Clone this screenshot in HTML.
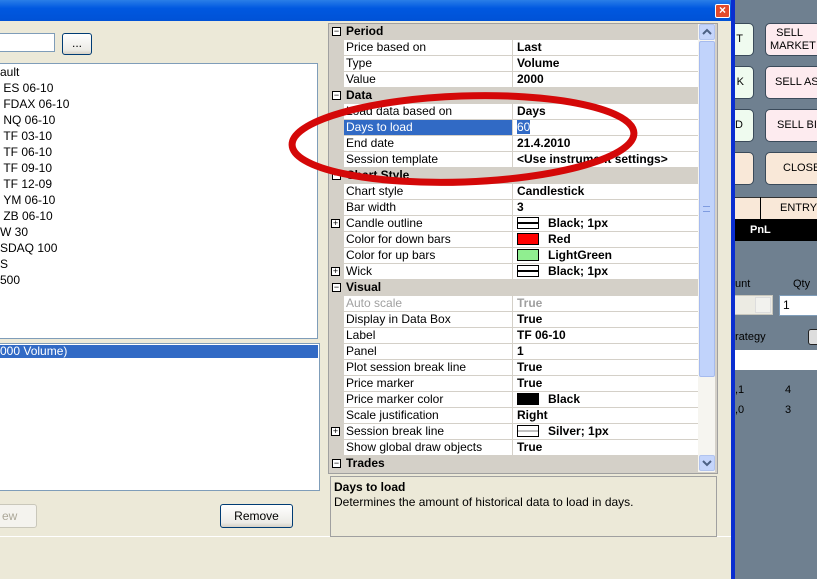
<!DOCTYPE html>
<html><head><meta charset="utf-8"><style>
*{margin:0;padding:0;box-sizing:border-box}
body{width:817px;height:579px;overflow:hidden;background:#ece9d8;font-family:"Liberation Sans",sans-serif;font-size:12px;position:relative;color:#000}
.a{position:absolute}
.row{position:absolute;left:344px;width:354px;height:16px;border-bottom:1px solid #d4d0c8;background:#fff}
.row .k{position:absolute;left:2px;top:0;white-space:nowrap;line-height:15px}
.row .v{position:absolute;left:168px;font-weight:bold;white-space:nowrap;border-left:1px solid #d4d0c8;padding-left:4px;height:16px;top:0;line-height:15px;width:186px}
.hd{position:absolute;left:329px;width:369px;height:16px;background:#d4d0c8;font-weight:bold;font-size:12px;line-height:15px;padding-left:17px}
.pm{position:absolute;left:3px;top:3px;width:9px;height:9px;border:1px solid #000;background:#fff;font-size:9px;line-height:7px;text-align:center;font-weight:normal}
.sw{display:inline-block;width:22px;height:12px;border:1px solid #000;vertical-align:-2px;margin-right:9px}
.li{position:absolute;left:0;height:16px;line-height:16px;font-size:12px;white-space:nowrap}
.rp{position:absolute;left:735px;top:0;width:82px;height:579px;background:#6f8090;overflow:hidden}
.rb{position:absolute;border:1px solid #3a4a5a;border-radius:5px;font-size:11px;text-align:center;white-space:nowrap;overflow:hidden}
</style></head><body>
<div class="a" style="left:0;top:0;width:733px;height:21px;background:linear-gradient(#2a7ee8,#0058e0 40%,#0052d6)"></div>
<div class="a" style="left:715px;top:4px;width:15px;height:14px;background:#e34a2a;border:1px solid #fff;border-radius:2px;color:#fff;font-weight:bold;font-size:12px;line-height:11px;text-align:center">×</div>
<div class="a" style="left:731px;top:0;width:4px;height:579px;background:#0a2ed0"></div>
<div class="rp">
<div class="rb" style="left:-20px;top:23px;width:39px;height:33px;background:#effbef;line-height:31px;text-align:right;padding-right:10px">T</div>
<div class="rb" style="left:30px;top:23px;width:60px;height:33px;background:#fdebef;line-height:13px;padding-top:3px;text-align:left;padding-left:4px">&nbsp;&nbsp;SELL<br>MARKET</div>
<div class="rb" style="left:-20px;top:66px;width:39px;height:33px;background:#effbef;line-height:31px;text-align:right;padding-right:9px">K</div>
<div class="rb" style="left:30px;top:66px;width:60px;height:33px;background:#fdebef;line-height:31px;text-align:left;padding-left:9px">SELL ASK</div>
<div class="rb" style="left:-20px;top:109px;width:39px;height:33px;background:#effbef;line-height:31px;text-align:right;padding-right:10px">D</div>
<div class="rb" style="left:30px;top:109px;width:60px;height:33px;background:#fdebef;line-height:31px;text-align:left;padding-left:11px">SELL BID</div>
<div class="rb" style="left:-20px;top:152px;width:39px;height:33px;background:#f9e8d8"></div>
<div class="rb" style="left:30px;top:152px;width:60px;height:33px;background:#f9e8d8;line-height:31px;text-align:left;padding-left:17px">CLOSE</div>
<div class="a" style="left:0;top:197px;width:82px;height:22px;background:#f9e8d8;border-top:1px solid #333"></div>
<div class="a" style="left:25px;top:197px;width:1px;height:22px;background:#000"></div>
<div class="a" style="left:45px;top:202px;font-size:11px">ENTRY</div>
<div class="a" style="left:0;top:219px;width:82px;height:22px;background:#000;color:#fff;font-weight:bold;font-size:11px;line-height:22px;padding-left:15px">PnL</div>
<div class="a" style="left:0;top:278px;font-size:11px">unt</div>
<div class="a" style="left:58px;top:278px;font-size:11px">Qty</div>
<div class="a" style="left:0;top:295px;width:38px;height:20px;background:#ecebe3;border:1px solid #c8c6bc;border-left:0"></div>
<div class="a" style="left:20px;top:297px;width:16px;height:16px;border:1px solid #ddd;background:#f2f2ee"></div>
<div class="a" style="left:44px;top:295px;width:40px;height:21px;background:#fff;border:1px solid #7f9db9;padding-left:3px;font-size:12px;line-height:18px">1</div>
<div class="a" style="left:0;top:331px;font-size:11px">rategy</div>
<div class="a" style="left:73px;top:329px;width:14px;height:16px;border:1px solid #222;border-radius:3px;background:#ddd"></div>
<div class="a" style="left:0;top:350px;width:82px;height:20px;background:#fff"></div>
<div class="a" style="left:0;top:384px;font-size:11px">,1</div>
<div class="a" style="left:50px;top:384px;font-size:11px">4</div>
<div class="a" style="left:0;top:404px;font-size:11px">,0</div>
<div class="a" style="left:50px;top:404px;font-size:11px">3</div>
</div>

<div class="a" style="left:-2px;top:33px;width:57px;height:19px;background:#fff;border:1px solid #7f9db9"></div>
<div class="a" style="left:62px;top:33px;width:30px;height:22px;border:1px solid #003c74;border-radius:3px;background:linear-gradient(#fff,#ecebe6 80%,#d6d0c5);text-align:center;line-height:18px">...</div>
<div class="a" style="left:-2px;top:63px;width:320px;height:276px;background:#fff;border:1px solid #7f9db9"></div>
<div class="li" style="top:64px">ault</div>
<div class="li" style="top:80px">&nbsp;ES 06-10</div>
<div class="li" style="top:96px">&nbsp;FDAX 06-10</div>
<div class="li" style="top:112px">&nbsp;NQ 06-10</div>
<div class="li" style="top:128px">&nbsp;TF 03-10</div>
<div class="li" style="top:144px">&nbsp;TF 06-10</div>
<div class="li" style="top:160px">&nbsp;TF 09-10</div>
<div class="li" style="top:176px">&nbsp;TF 12-09</div>
<div class="li" style="top:192px">&nbsp;YM 06-10</div>
<div class="li" style="top:208px">&nbsp;ZB 06-10</div>
<div class="li" style="top:224px">W 30</div>
<div class="li" style="top:240px">SDAQ 100</div>
<div class="li" style="top:256px">S</div>
<div class="li" style="top:272px">500</div>
<div class="a" style="left:-2px;top:343px;width:322px;height:148px;background:#fff;border:1px solid #7f9db9"></div>
<div class="a" style="left:0;top:345px;width:318px;height:13px;background:#316ac5;color:#fff;font-size:12px;line-height:13px">000 Volume)</div>
<div class="a" style="left:-3px;top:504px;width:40px;height:24px;border:1px solid #c9c7ba;border-radius:3px;background:#f4f3ee;color:#aca899;line-height:22px;padding-left:4px;font-size:12px">ew</div>
<div class="a" style="left:220px;top:504px;width:73px;height:24px;border:1px solid #003c74;border-radius:3px;background:linear-gradient(#fff,#ecebe6 80%,#d6d0c5);text-align:center;line-height:22px;font-size:12px">Remove</div>
<div class="a" style="left:0;top:536px;width:731px;height:1px;background:#fff"></div>

<div class="a" style="left:328px;top:23px;width:390px;height:451px;background:#d4d0c8;border:1px solid #a0a0a0"></div>
<div class="hd" style="top:24px"><span class="pm">−</span>Period</div>
<div class="row" style="top:40px"><span class="k">Price based on</span><span class="v">Last</span></div>
<div class="row" style="top:56px"><span class="k">Type</span><span class="v">Volume</span></div>
<div class="row" style="top:72px"><span class="k">Value</span><span class="v">2000</span></div>
<div class="hd" style="top:88px"><span class="pm">−</span>Data</div>
<div class="row" style="top:104px"><span class="k">Load data based on</span><span class="v">Days</span></div>
<div class="row" style="top:120px"><span class="k" style="left:0;padding-left:2px;width:168px;height:15px;background:#316ac5;color:#fff">Days to load</span><span class="v"><span style="background:#316ac5;color:#fff;font-weight:normal;font-size:12px">60</span></span></div>
<div class="row" style="top:136px"><span class="k">End date</span><span class="v">21.4.2010</span></div>
<div class="row" style="top:152px"><span class="k">Session template</span><span class="v">&lt;Use instrument settings&gt;</span></div>
<div class="hd" style="top:168px"><span class="pm">−</span>Chart Style</div>
<div class="row" style="top:184px"><span class="k">Chart style</span><span class="v">Candlestick</span></div>
<div class="row" style="top:200px"><span class="k">Bar width</span><span class="v">3</span></div>
<div class="row" style="top:216px"><span class="pm" style="left:-13px;top:3px">+</span><span class="k">Candle outline</span><span class="v"><span class="sw" style="background:linear-gradient(#fff 4px,#000 4px,#000 6px,#fff 6px)"></span>Black; 1px</span></div>
<div class="row" style="top:232px"><span class="k">Color for down bars</span><span class="v"><span class="sw" style="background:#f00"></span>Red</span></div>
<div class="row" style="top:248px"><span class="k">Color for up bars</span><span class="v"><span class="sw" style="background:#90ee90"></span>LightGreen</span></div>
<div class="row" style="top:264px"><span class="pm" style="left:-13px;top:3px">+</span><span class="k">Wick</span><span class="v"><span class="sw" style="background:linear-gradient(#fff 4px,#000 4px,#000 6px,#fff 6px)"></span>Black; 1px</span></div>
<div class="hd" style="top:280px"><span class="pm">−</span>Visual</div>
<div class="row" style="top:296px;color:#a0a0a0"><span class="k">Auto scale</span><span class="v">True</span></div>
<div class="row" style="top:312px"><span class="k">Display in Data Box</span><span class="v">True</span></div>
<div class="row" style="top:328px"><span class="k">Label</span><span class="v">TF 06-10</span></div>
<div class="row" style="top:344px"><span class="k">Panel</span><span class="v">1</span></div>
<div class="row" style="top:360px"><span class="k">Plot session break line</span><span class="v">True</span></div>
<div class="row" style="top:376px"><span class="k">Price marker</span><span class="v">True</span></div>
<div class="row" style="top:392px"><span class="k">Price marker color</span><span class="v"><span class="sw" style="background:#000"></span>Black</span></div>
<div class="row" style="top:408px"><span class="k">Scale justification</span><span class="v">Right</span></div>
<div class="row" style="top:424px"><span class="pm" style="left:-13px;top:3px">+</span><span class="k">Session break line</span><span class="v"><span class="sw" style="background:linear-gradient(#fff 4px,#c0c0c0 4px,#c0c0c0 6px,#fff 6px)"></span>Silver; 1px</span></div>
<div class="row" style="top:440px"><span class="k">Show global draw objects</span><span class="v">True</span></div>
<div class="hd" style="top:456px"><span class="pm">−</span>Trades</div>
<div class="a" style="left:698px;top:24px;width:17px;height:448px;background:#f6f5f0"></div>
<div class="a" style="left:699px;top:24px;width:16px;height:16px;background:#c5d5fb;border:1px solid #b2c4ee;border-radius:2px"></div>
<svg class="a" style="left:702px;top:28px" width="10" height="8"><path d="M1 6 L5 2 L9 6" fill="none" stroke="#4d6185" stroke-width="2"/></svg>
<div class="a" style="left:699px;top:41px;width:16px;height:336px;background:#c1d3fb;border:1px solid #a6bbee;border-radius:2px"></div>
<div class="a" style="left:703px;top:206px;width:7px;height:6px;border-top:1px solid #7f9ce0;border-bottom:1px solid #7f9ce0"></div>
<div class="a" style="left:699px;top:455px;width:16px;height:16px;background:#c5d5fb;border:1px solid #b2c4ee;border-radius:2px"></div>
<svg class="a" style="left:702px;top:459px" width="10" height="8"><path d="M1 2 L5 6 L9 2" fill="none" stroke="#4d6185" stroke-width="2"/></svg>
<div class="a" style="left:330px;top:476px;width:387px;height:61px;border:1px solid #a0a0a0;padding:3px 3px"><div style="font-weight:bold;font-size:12px">Days to load</div><div style="margin-top:1px">Determines the amount of historical data to load in days.</div></div>

<svg class="a" style="left:0;top:0" width="817" height="579"><ellipse cx="463" cy="139" rx="171" ry="43" transform="rotate(-2 463 139)" fill="none" stroke="#d40808" stroke-width="7"/></svg>
</body></html>
